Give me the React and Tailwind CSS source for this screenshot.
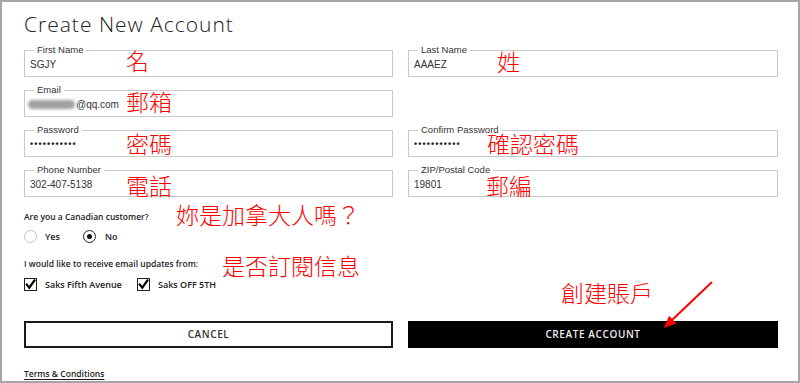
import React from "react";

const fields = [
  { label: "First Name", value: "SGJY" },
  { label: "Last Name", value: "AAAEZ" },
  { label: "Email", value: "@qq.com", blurred: true },
  null,
  { label: "Password", value: "•••••••••••", masked: true },
  { label: "Confirm Password", value: "•••••••••••", masked: true },
  { label: "Phone Number", value: "302-407-5138" },
  { label: "ZIP/Postal Code", value: "19801" },
];

// red notes written on top of the screenshot
const notes = [
  { text: "名", cls: "left-[124px] top-[45px]" },
  { text: "姓", cls: "left-[495px] top-[46px]" },
  { text: "郵箱", cls: "left-[124px] top-[86px]" },
  { text: "密碼", cls: "left-[124px] top-[128px]" },
  { text: "確認密碼", cls: "left-[485px] top-[128px]" },
  { text: "電話", cls: "left-[124px] top-[170px]" },
  { text: "郵編", cls: "left-[484px] top-[170px]" },
  { text: "妳是加拿大人嗎？", cls: "left-[174px] top-[199px]" },
  { text: "是否訂閱信息", cls: "left-[220px] top-[250px]" },
  { text: "創建賬戶", cls: "left-[559px] top-[277px]" },
];

const Field = ({ field }) => {
  if (!field) return <div />;
  return (
    <div className="relative h-[27px] border border-[#c9c9c9] flex items-center pl-[5px] pt-[2px]">
      <span className="absolute -top-[6px] left-[9px] bg-white px-[3px] text-[9.5px] leading-[10px] text-[#333]">
        {field.label}
      </span>
      {field.blurred && <span className="inline-block w-[47px] h-[9px] -ml-[2px] mr-[1px] rounded-full bg-[#a0a0a0] blur-[1.5px]" />}
      <span
        className={
          field.masked
            ? "text-[9px] tracking-[1.1px] text-[#222] font-bold"
            : "text-[10px] text-[#333]"
        }
      >
        {field.value}
      </span>
    </div>
  );
};

const Radio = ({ checked }) => (
  <span
    className={`w-[13px] h-[13px] rounded-full flex items-center justify-center ${
      checked ? "border-[1.5px] border-[#222]" : "border border-[#c4c4c4]"
    }`}
  >
    {checked && <span className="w-[5px] h-[5px] rounded-full bg-[#111]" />}
  </span>
);

const Checkbox = () => (
  <span className="w-[13px] h-[13px] border-[1.5px] border-[#222] flex items-center justify-center">
    <svg width="11" height="11" viewBox="0 0 11 11">
      <path d="M1.8 5.6 L4.3 8.6 L9.4 1.4" fill="none" stroke="#000" strokeWidth="2.2" strokeLinecap="square" />
    </svg>
  </span>
);

export default function App() {
  return (
    <div className="relative w-[800px] h-[383px] overflow-hidden bg-white border-2 border-[#a5a5a5] font-['Open_Sans',sans-serif] text-[#333]">
      <div className="pl-[22px] pt-[8px] w-[776px]">
        <h1 className="text-[21px] leading-[28px] font-light text-[#222] tracking-[1px]">Create New Account</h1>

        <div className="mt-[12px] grid grid-cols-[369px_370px] gap-x-[15px] gap-y-[13px] font-['Liberation_Sans',Arial,sans-serif]">
          {fields.map((f, i) => (
            <Field key={i} field={f} />
          ))}
        </div>

        <p className="mt-[13px] text-[8.5px] leading-[14px] font-semibold text-[#222]">Are you a Canadian customer?</p>
        <div className="mt-[6px] flex items-center text-[9px] font-semibold text-[#222]">
          <Radio />
          <span className="ml-[8px] w-[38px]">Yes</span>
          <Radio checked />
          <span className="ml-[9px]">No</span>
        </div>

        <p className="mt-[13px] text-[8.5px] leading-[14px] font-semibold text-[#222]">I would like to receive email updates from:</p>
        <div className="mt-[7px] flex items-center text-[9px] font-semibold text-[#222]">
          <Checkbox />
          <span className="ml-[8px] w-[92px]">Saks Fifth Avenue</span>
          <Checkbox />
          <span className="ml-[8px]">Saks OFF 5TH</span>
        </div>

        <div className="mt-[30px] grid grid-cols-[369px_370px] gap-x-[15px]">
          <button className="h-[27px] border-2 border-[#1a1a1a] bg-white text-[10px] font-semibold tracking-[0.6px] text-[#333]">
            CANCEL
          </button>
          <button className="h-[27px] bg-black text-[10px] font-semibold tracking-[0.6px] text-[#eee]">
            CREATE ACCOUNT
          </button>
        </div>

        <a className="mt-[19px] block w-max text-[8.5px] leading-[14px] font-semibold text-[#222] underline underline-offset-2">
          Terms &amp; Conditions
        </a>
      </div>

      {notes.map((n) => (
        <span
          key={n.text}
          className={`absolute ${n.cls} text-[23px] leading-[26px] text-[#ff0000] font-['Noto_Sans_CJK_TC',sans-serif] font-light`}
        >
          {n.text}
        </span>
      ))}

      <svg className="absolute left-[648px] top-[273px]" width="70" height="60" viewBox="650 275 70 60">
        <line x1="712" y1="282" x2="671" y2="321" stroke="#ff0000" strokeWidth="2" />
        <polygon points="664,328 676.5,323.5 669,315.8" fill="#ff0000" />
      </svg>
    </div>
  );
}
